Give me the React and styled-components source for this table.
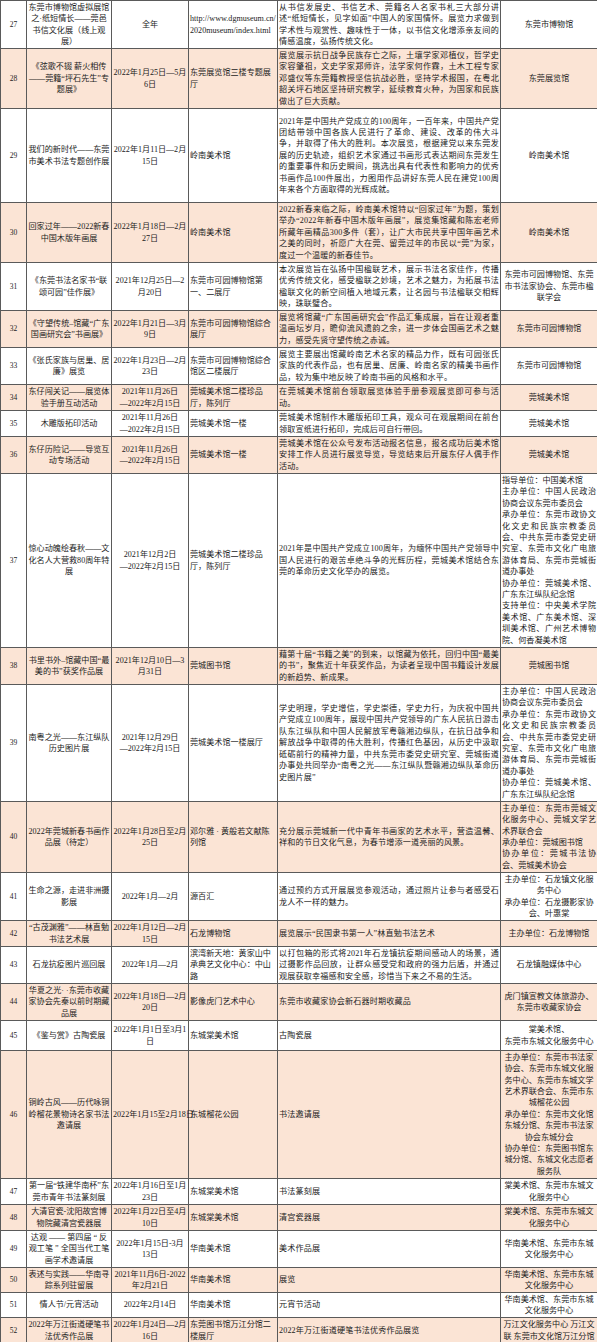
import React from 'react';
import styled, { createGlobalStyle } from 'styled-components';

const GlobalStyle = createGlobalStyle`
  html, body {
    margin: 0;
    padding: 0;
    background: #ffffff;
  }
  body {
    font-family: "Liberation Serif", "Noto Sans CJK SC", serif;
    color: #1c1c1c;
  }
`;

const Sheet = styled.table`
  width: 597px;
  table-layout: fixed;
  border-collapse: collapse;
  font-size: 8.1px;
  line-height: 11.4px;
`;

const Row = styled.tr`
  height: ${(p) => p.$h}px;
  background: ${(p) => (p.$shade ? '#fbe4d5' : '#ffffff')};
`;

const Cell = styled.td`
  border: 1px solid #5a5a5a;
  padding: 0 1px;
  vertical-align: middle;
  text-align: ${(p) => p.$align || 'center'};
  white-space: ${(p) => (p.$nowrap ? 'nowrap' : 'pre-line')};
  word-break: ${(p) => (p.$breakAll ? 'break-all' : 'normal')};
  overflow: visible;
`;

const NumCell = styled(Cell)`
  font-size: 7.5px;
`;

const DescCell = styled(Cell)`
  letter-spacing: 0.15px;
`;

const COLS = [26, 85, 77, 89, 223, 97];

const rows = [
  {
    no: 27, h: 48,
    name: '东莞市博物馆虚拟展馆之·纸短情长——莞邑书信文化展（线上观展）',
    date: '全年',
    place: 'http://www.dgmuseum.cn/2020museum/index.html', placeBreak: true,
    desc: '从书信发展史、书信艺术、莞籍名人名家书札三大部分讲述“纸短情长，见字如面”中国人的家国情怀。展览力求做到学术性与观赏性、趣味性于一体，以书信文化增添亲友间的情感温度，弘扬传统文化。',
    org: '东莞市博物馆',
  },
  {
    no: 28, h: 60,
    name: '《弦歌不辍 薪火相传——莞籍“坪石先生”专题展》',
    date: '2022年1月25日—5月6日',
    place: '东莞展览馆三楼专题展厅',
    desc: '展览展示抗日战争民族存亡之际，土壤学家邓植仪，哲学史家容肇祖，文史学家郑师许，法学家何作霖，土木工程专家邓盛仪等东莞籍教授坚信抗战必胜，坚持学术报国，在粤北韶关坪石地区坚持研究教学，延续教育火种，为国家和民族做出了巨大贡献。',
    org: '东莞展览馆',
  },
  {
    no: 29, h: 94,
    name: '我们的新时代——东莞市美术书法专题创作展',
    date: '2022年1月11日—2月15日',
    place: '岭南美术馆',
    desc: '2021年是中国共产党成立的100周年，一百年来，中国共产党团结带领中国各族人民进行了革命、建设、改革的伟大斗争，并取得了伟大的胜利。本次展览，根据建党以来东莞发展的历史轨迹，组织艺术家通过书画形式表达期间东莞发生的重要事件和历史瞬间，挑选出具有代表性和影响力的优秀书画作品100件展出，力图用作品讲好东莞人民在建党100周年来各个方面取得的光辉成就。',
    org: '岭南美术馆',
  },
  {
    no: 30, h: 60,
    name: '回家过年——2022新春中国木版年画展',
    date: '2022年1月18日—2月27日',
    place: '岭南美术馆',
    desc: '2022新春来临之际，岭南美术馆特以“回家过年”为题，策划举办“2022年新春中国木版年画展”，展览集馆藏和陈宏老师所藏年画精品300多件（套），让广大市民共享中国年画艺术之美的同时，祈愿广大在莞、留莞过年的市民以“莞”为家，度过一个温暖的新春佳节。',
    org: '岭南美术馆',
  },
  {
    no: 31, h: 48,
    name: '《东莞书法名家书“联颂可园”佳作展》',
    date: '2021年12月25日—2月20日',
    place: '东莞市可园博物馆第一、二展厅',
    desc: '本次展览旨在弘扬中国楹联艺术，展示书法名家佳作，传播优秀传统文化，感受楹联之妙境，艺术之魅力，为拓展书法楹联文化的新空间植入地域元素，让名园与书法楹联交相辉映，珠联璧合。',
    org: '东莞市可园博物馆、东莞市书法家协会、东莞市楹联学会',
  },
  {
    no: 32, h: 37,
    name: '《守望传统–馆藏“广东国画研究会”书画展》',
    date: '2022年1月21日—3月9日',
    place: '东莞市可园博物馆综合展厅',
    desc: '展览将馆藏“广东国画研究会”作品汇集成展，旨在让观者重温画坛岁月，瞻仰流风遗韵之余，进一步体会国画艺术之魅力，感受先贤守望传统之赤诚。',
    org: '东莞市可园博物馆',
  },
  {
    no: 33, h: 37,
    name: '《张氏家族与居巢、居廉》展览',
    date: '2022年1月23日—2月23日',
    place: '东莞市可园博物馆综合馆区二楼展厅',
    desc: '展览主要展出馆藏岭南艺术名家的精品力作，既有可园张氏家族的代表作品，也有居巢、居廉、岭南名家的精美书画作品，较为集中地反映了岭南书画的风格和水平。',
    org: '东莞市可园博物馆',
  },
  {
    no: 34, h: 26,
    name: '东仔闯关记——展览体验手册互动活动',
    date: '2021年11月26日\n—2022年2月15日',
    place: '莞城美术馆二楼珍品厅，陈列厅',
    desc: '在莞城美术馆前台领取展览体验手册参观展览即可参与活动。',
    org: '莞城美术馆',
  },
  {
    no: 35, h: 26,
    name: '木雕版拓印活动',
    date: '2021年11月26日\n—2022年2月15日',
    place: '莞城美术馆一楼',
    desc: '莞城美术馆制作木雕版拓印工具，观众可在观展期间在前台领取宣纸进行拓印，完成后可自行带回。',
    org: '莞城美术馆',
  },
  {
    no: 36, h: 37,
    name: '东仔历险记——导览互动专场活动',
    date: '2021年11月26日\n—2022年2月15日',
    place: '莞城美术馆一楼',
    desc: '莞城美术馆在公众号发布活动报名信息，报名成功后美术馆安排工作人员进行展览导览，导览结束后开展东仔人偶手作活动。',
    org: '莞城美术馆',
  },
  {
    no: 37, h: 174,
    name: '惊心动魄绘春秋——文化名人大营救80周年特展',
    date: '2021年12月2日\n—2022年2月15日',
    place: '莞城美术馆二楼珍品厅，陈列厅',
    desc: '2021年是中国共产党成立100周年，为缅怀中国共产党领导中国人民进行的艰苦卓绝斗争的光辉历程，莞城美术馆结合东莞的革命历史文化举办的展览。',
    org: '指导单位：中国美术馆\n主办单位：中国人民政治协商会议东莞市委员会\n承办单位：东莞市政协文化文史和民族宗教委员会、中共东莞市委党史研究室、东莞市文化广电旅游体育局、东莞市莞城街道办事处\n协办单位：莞城美术馆、广东东江纵队纪念馆\n支持单位：中央美术学院美术馆、广东美术馆、深圳美术馆、广州艺术博物院、何香凝美术馆',
    orgLeft: true,
  },
  {
    no: 38, h: 37,
    name: '书里书外–馆藏中国“最美的书”获奖作品展',
    date: '2021年12月10日—3月31日',
    place: '莞城图书馆',
    desc: '藉第十届“书籍之美”的到来，以馆藏为依托，回归中国“最美的书”，聚焦近十年获奖作品，为读者呈现中国书籍设计发展的新趋势、新成果。',
    org: '莞城图书馆',
  },
  {
    no: 39, h: 117,
    name: '南粤之光——东江纵队历史图片展',
    date: '2021年12月29日\n—2022年2月15日',
    place: '莞城美术馆一楼展厅',
    desc: '学史明理，学史增信，学史崇德，学史力行，为庆祝中国共产党成立100周年，展现中国共产党领导的广东人民抗日游击队东江纵队和中国人民解放军粤赣湘边纵队，在抗日战争和解放战争中取得的伟大胜利，传播红色基因，从历史中汲取砥砺前行的精神力量，中共东莞市委党史研究室、莞城街道办事处共同举办“南粤之光——东江纵队暨赣湘边纵队革命历史图片展”',
    org: '主办单位：中国人民政治协商会议东莞市委员会\n承办单位：东莞市政协文化文史和民族宗教委员会、中共东莞市委党史研究室、东莞市文化广电旅游体育局、东莞市莞城街道办事处\n协办单位：莞城美术馆、广东东江纵队纪念馆',
    orgLeft: true,
  },
  {
    no: 40, h: 71,
    name: '2022年莞城新春书画作品展（待定）',
    date: '2022年1月28日至2月25日',
    place: '邓尔雅 · 黄般若文献陈列馆',
    desc: '充分展示莞城新一代中青年书画家的艺术水平，营造温馨、祥和的节日文化气息，为春节增添一道亮丽的风景。',
    org: '主办单位：东莞市莞城文化服务中心、莞城文学艺术界联合会\n承办单位：莞城图书馆\n协办单位：莞城书法协会、莞城美术协会',
    orgLeft: true,
  },
  {
    no: 41, h: 48,
    name: '生命之源，走进非洲摄影展',
    date: '2022年1月—2月',
    place: '源百汇',
    desc: '通过预约方式开展展览参观活动，通过照片让参与者感受石龙人不一样的魅力。',
    org: '主办单位：石龙镇文化服务中心\n承办单位：石龙摄影家协会、叶惠棠',
  },
  {
    no: 42, h: 26,
    name: '“古茂渊雅”——林直勉书法艺术展',
    date: '2022年1月12日—2月15日',
    place: '石龙博物馆',
    desc: '展览展示“民国隶书第一人”林直勉书法艺术',
    org: '主办单位：石龙博物馆',
  },
  {
    no: 43, h: 37,
    name: '石龙抗疫图片巡回展',
    date: '2022年1月—2月',
    place: '滨湾新天地：黄家山中承典艺文化中心：中山路',
    desc: '以打包箱的形式将2021年石龙镇抗疫期间感动人的场景，通过摄影作品回放，让群众感受党和政府的强力后盾，并通过观展获取幸福感和安全感，珍惜当下来之不易的生活。',
    org: '石龙镇融媒体中心',
  },
  {
    no: 44, h: 37,
    name: '华夏之光· ·东莞市收藏家协会先秦以前时期藏品展',
    date: '2022年1月18日—2月20日',
    place: '影像虎门艺术中心',
    desc: '东莞市收藏家协会新石器时期收藏品',
    org: '虎门镇宣教文体旅游办、东莞市收藏家协会',
  },
  {
    no: 45, h: 30,
    name: '《鉴与赏》古陶瓷展',
    date: '2022年1月1日至3月1日',
    place: '东城棠美术馆',
    desc: '古陶瓷展',
    org: '棠美术馆、\n东莞市东城文化服务中心',
  },
  {
    no: 46, h: 128,
    name: '铜岭古风——历代咏铜岭榴花景物诗名家书法邀请展',
    date: '2022年1月15至2月18日', dateNowrap: true,
    place: '东城榴花公园',
    desc: '书法邀请展',
    org: '主办单位：东莞市书法家协会、东莞市东城文化服务中心、东莞市东城文学艺术界联合会、东莞市东城榴花公园\n承办单位：东莞市文化馆东城分馆、东莞市书法家协会东城分会\n协办单位：东莞图书馆东城分馆、东城文化志愿者服务队',
  },
  {
    no: 47, h: 26,
    name: '第一届“铁建华南杯”东莞市青年书法篆刻展',
    date: '2022年1月16日至1月23日',
    place: '东城棠美术馆',
    desc: '书法篆刻展',
    org: '棠美术馆、东莞市东城文化服务中心',
  },
  {
    no: 48, h: 26,
    name: '大清官瓷-沈阳故宫博物院藏清宫瓷器展',
    date: '2022年1月22日至4月10日',
    place: '东城棠美术馆',
    desc: '清宫瓷器展',
    org: '棠美术馆、东莞市东城文化服务中心',
  },
  {
    no: 49, h: 37,
    name: '达观 —— 第四届 “ 反观工笔 ” 全国当代工笔画学术邀请展',
    date: '2022年1月15日-3月13日',
    place: '华南美术馆',
    desc: '美术作品展',
    org: '华南美术馆、东莞市东城文化服务中心',
  },
  {
    no: 50, h: 25,
    name: '表述与实践——华南寻踪系列驻留展',
    date: '2021年11月6日-2022年2月21日',
    place: '华南美术馆',
    desc: '展览',
    org: '华南美术馆、东莞市东城文化服务中心',
  },
  {
    no: 51, h: 25,
    name: '情人节/元宵活动',
    date: '2022年2月14日',
    place: '华南美术馆',
    desc: '元宵节活动',
    org: '华南美术馆、东莞市东城文化服务中心',
  },
  {
    no: 52, h: 26,
    name: '2022年万江街道硬笔书法优秀作品展',
    date: '2022年1月24日—2月16日',
    place: '东莞图书馆万江分馆二楼展厅',
    desc: '2022年万江街道硬笔书法优秀作品展览',
    org: '万江文化服务中心 万江文联 东莞市文化馆万江分馆',
  },
];

const ExhibitionTable = () => (
  <Sheet>
    <colgroup>
      {COLS.map((w, i) => (
        <col key={i} style={{ width: w }} />
      ))}
    </colgroup>
    <tbody>
      {rows.map((r) => (
        <Row key={r.no} $h={r.h} $shade={r.no % 2 === 0}>
          <NumCell>{r.no}</NumCell>
          <Cell>{r.name}</Cell>
          <Cell $nowrap={r.dateNowrap}>{r.date}</Cell>
          <Cell $align="left" $breakAll={r.placeBreak}>{r.place}</Cell>
          <DescCell $align="justify">{r.desc}</DescCell>
          <Cell $align={r.orgLeft ? 'justify' : 'center'}>{r.org}</Cell>
        </Row>
      ))}
    </tbody>
  </Sheet>
);

const App = () => (
  <>
    <GlobalStyle />
    <ExhibitionTable />
  </>
);

export default App;
